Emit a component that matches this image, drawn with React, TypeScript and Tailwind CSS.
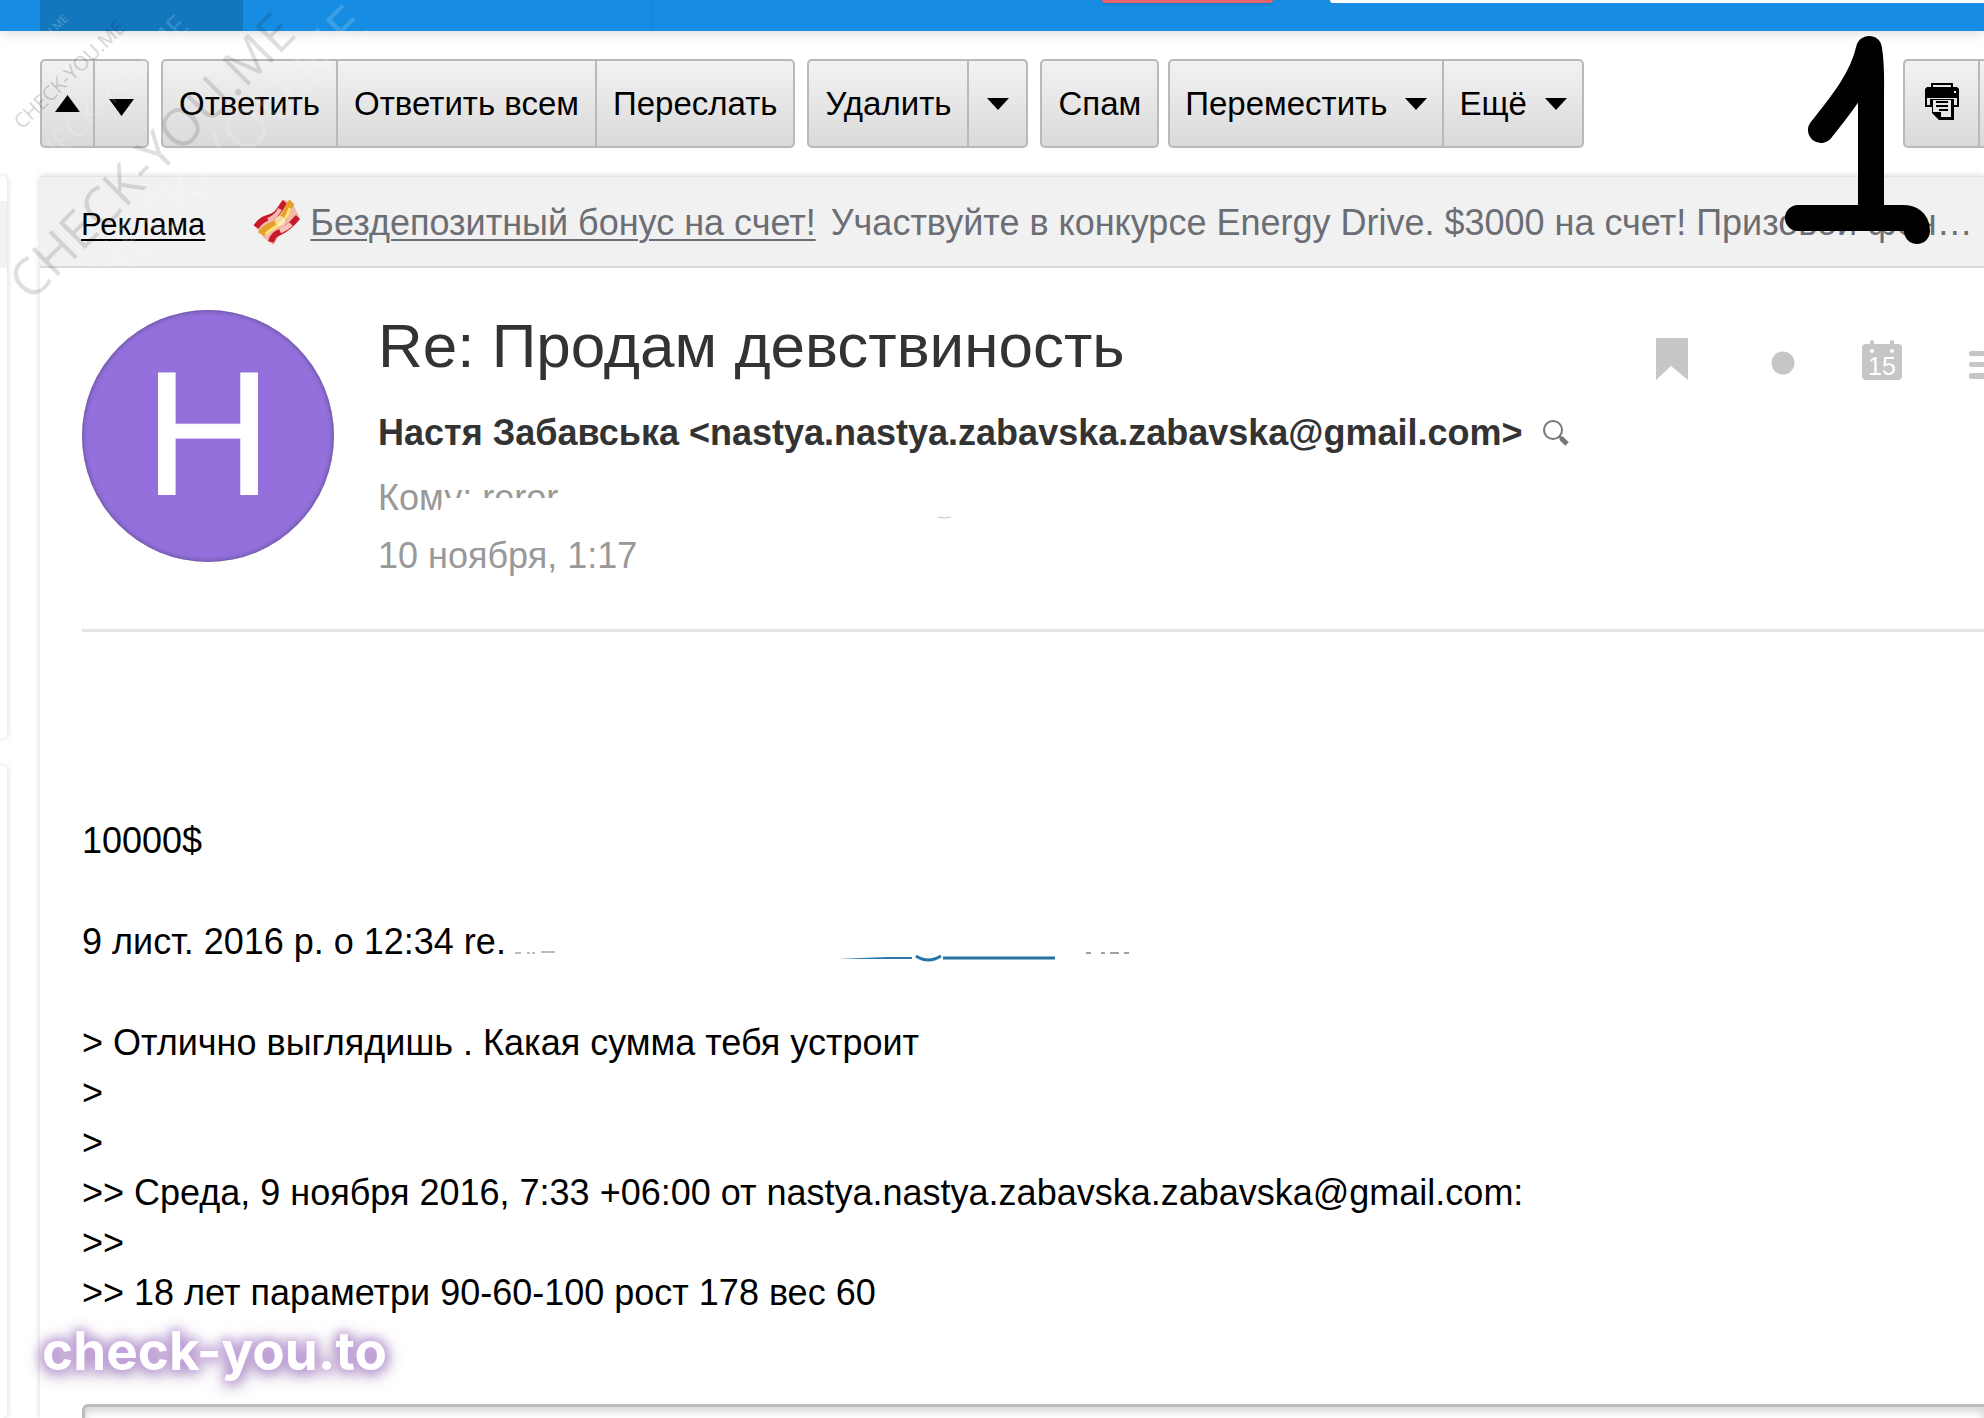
import type { ReactNode } from "react";

const quotedLines = [
  "> Отлично выглядишь . Какая сумма тебя устроит",
  ">",
  ">",
  ">> Среда, 9 ноября 2016, 7:33 +06:00 от nastya.nastya.zabavska.zabavska@gmail.com:",
  ">>",
  ">> 18 лет параметри 90-60-100 рост 178 вес 60",
];

function ButtonGroup({ children, className = "" }: { children: ReactNode; className?: string }) {
  return (
    <div
      className={`flex h-[89px] shrink-0 divide-x-2 divide-[#b9b9b9] overflow-hidden border-2 border-[#b9b9b9] bg-linear-to-b from-[#f2f2f2] to-[#dadada] ${className}`}
    >
      {children}
    </div>
  );
}

function ToolButton({ children, label, className = "px-4" }: { children?: ReactNode; label?: string; className?: string }) {
  return (
    <button type="button" aria-label={label} className={`flex items-center justify-center whitespace-nowrap text-[33px] leading-10 text-black ${className}`}>
      {children}
    </button>
  );
}

function Caret() {
  return (
    <svg width="22" height="12" viewBox="0 0 22 12" aria-hidden="true">
      <path d="M0 0h22L11 12z" />
    </svg>
  );
}

function PrintIcon() {
  return (
    <svg width="34" height="37" viewBox="0 0 34 37" className="-mt-1" aria-hidden="true">
      <path d="M6 0h22v6H6z" />
      <path d="M8 2h18v3H8z" fill="#e9e9e9" />
      <path d="M2 4h30l2 2v18h-5v13H14L7 30v-6H0V6z" />
      <path d="M2 15h30v7h-3v-6H5v6H2z" fill="#e6e6e6" />
      <path d="M8 17h18v17H16v-5H8z" fill="#e6e6e6" />
      <path d="M11 18h12v2H11zM11 22h12v2H11zM14 26h9v2h-9z" />
      <path d="M29 8h2v2h-2z" fill="#fff" />
    </svg>
  );
}

function RibbonIcon() {
  return (
    <svg width="46" height="46" viewBox="0 0 46 46" className="shrink-0" aria-hidden="true">
      <path d="M0 25C8 14 16 18 22 11C27 5 26 2 30 0L38 2L45 16C42 28 34 26 28 32C23 36 23 42 19 45L10 38Z" fill="#f0b9a8" />
      <path d="M2 27C10 15 17 20 23 13C28 7 28 5 31 2" fill="none" stroke="#c8192c" strokeWidth="6" />
      <path d="M14 20C20 18 23 15 26 9" fill="none" stroke="#f7b6b0" strokeWidth="4" />
      <path d="M7 34C13 24 19 28 27 20C35 13 32 8 38 2" fill="none" stroke="#e3a02a" strokeWidth="7" />
      <path d="M12 34C17 28 22 28 28 22C33 17 34 14 36 8" fill="none" stroke="#ffe27c" strokeWidth="3" />
      <path d="M17 42C20 31 27 34 34 27C39 23 41 20 44 17" fill="none" stroke="#c8192c" strokeWidth="6" />
      <path d="M26 31C31 29 34 27 37 24" fill="none" stroke="#f9c4b8" strokeWidth="5" />
      <circle cx="26" cy="21" r="5" fill="#fff2cf" opacity=".7" />
    </svg>
  );
}

function Toolbar() {
  return (
    <div className="flex pl-10 pt-7 pb-7">
      <ButtonGroup className="mr-3 rounded-[5px]">
        <ToolButton label="Предыдущее" className="w-[53px]">
          <svg width="25" height="17" viewBox="0 0 25 17" aria-hidden="true">
            <path d="M0 17h25L12.500 0z" />
          </svg>
        </ToolButton>
        <ToolButton label="Следующее" className="w-[52px] pt-2">
          <svg width="25" height="17" viewBox="0 0 25 17" aria-hidden="true">
            <path d="M0 0h25L12.500 17z" />
          </svg>
        </ToolButton>
      </ButtonGroup>
      <ButtonGroup className="mr-3 rounded-[5px]">
        <ToolButton>Ответить</ToolButton>
        <ToolButton>Ответить всем</ToolButton>
        <ToolButton>Переслать</ToolButton>
      </ButtonGroup>
      <ButtonGroup className="mr-3 rounded-[5px]">
        <ToolButton>Удалить</ToolButton>
        <ToolButton label="Варианты удаления" className="w-[57px]">
          <Caret />
        </ToolButton>
      </ButtonGroup>
      <ButtonGroup className="mr-[9px] rounded-[5px]">
        <ToolButton>Спам</ToolButton>
      </ButtonGroup>
      <ButtonGroup className="rounded-[5px]">
        <ToolButton className="gap-[18px] px-[15px]">
          Переместить <Caret />
        </ToolButton>
        <ToolButton className="gap-[18px] px-[15px]">
          Ещё <Caret />
        </ToolButton>
      </ButtonGroup>
      <ButtonGroup className="ml-auto w-[81px] rounded-l-[5px] border-r-0">
        <ToolButton label="Печать" className="w-[75px] shrink-0">
          <PrintIcon />
        </ToolButton>
        <ToolButton label="Далее" className="w-10 shrink-0" />
      </ButtonGroup>
    </div>
  );
}

function AdBar() {
  return (
    <div className="flex h-[92px] items-center overflow-hidden border-t border-b-2 border-t-[#e4e4e4] border-b-[#d9d9d9] bg-[#f1f1f1] pt-[3px] pl-[41px]">
      <a href="#ad" className="mt-[3px] mr-[49px] text-[31px] leading-10 text-black underline decoration-2 underline-offset-4">
        Реклама
      </a>
      <RibbonIcon />
      <p className="ml-[10px] min-w-0 flex-1 truncate text-[36px] leading-[50px] text-[#6b6e75]">
        <a href="#bonus" className="mr-[15px] underline decoration-2 underline-offset-4">
          Бездепозитный бонус на счет!
        </a>
        Участвуйте в конкурсе Energy Drive. $3000 на счет! Призовой фон…
      </p>
    </div>
  );
}

function MessageActions() {
  return (
    <div className="flex w-[328px] shrink-0 justify-between overflow-hidden pt-7 text-[#c6c6c6]">
      <button type="button" aria-label="Закладка" className="h-[42px]">
        <svg width="32" height="42" viewBox="0 0 32 42" fill="currentColor">
          <path d="M0 0h32v42L15 28 0 42z" />
        </svg>
      </button>
      <button type="button" aria-label="Пометить непрочитанным" className="ml-4 h-[49px]">
        <svg width="24" height="24" viewBox="0 0 24 24" fill="currentColor">
          <circle cx="12" cy="12" r="11.500" />
        </svg>
      </button>
      <button type="button" aria-label="Календарь" className="h-[44px]">
        <svg width="40" height="40" viewBox="0 0 40 40" fill="currentColor">
          <rect y="4" width="40" height="36" rx="4" />
          <rect x="8" width="4" height="9" rx="2" />
          <rect x="28" width="4" height="9" rx="2" />
          <circle cx="10" cy="11" r="2" fill="#fff" />
          <circle cx="30" cy="11" r="2" fill="#fff" />
          <text x="20" y="35" fontSize="25" textAnchor="middle" fill="#fff">
            15
          </text>
        </svg>
      </button>
      <button type="button" aria-label="Меню" className="h-[54px] w-[15px] overflow-hidden">
        <svg width="40" height="28" viewBox="0 0 40 28" fill="currentColor" className="max-w-none">
          <rect width="40" height="5" rx="2" />
          <rect y="11" width="40" height="5" rx="2" />
          <rect y="22" width="40" height="6" rx="2" />
        </svg>
      </button>
    </div>
  );
}

function MessageHeader() {
  return (
    <div className="flex border-b-3 border-[#e5e5e5] pb-11">
      <div className="mr-11 flex size-[252px] shrink-0 items-center justify-center rounded-full bg-[#9370db] pb-[5px] text-[177px] leading-none text-white shadow-[inset_0_0_5px_rgba(60,50,90,0.7)] [-webkit-text-stroke:1px_white]">
        Н
      </div>
      <div className="min-w-0 flex-1">
        <h1 className="text-[62px] leading-[72px] text-[#333]">Re: Продам девствиность</h1>
        <div className="mt-[19px] flex items-center text-[36px] leading-[64px] font-bold whitespace-nowrap text-[#333]">
          Настя Забавська &lt;nastya.nastya.zabavska.zabavska@gmail.com&gt;
          <button type="button" aria-label="Найти письма" className="ml-5">
            <svg width="26" height="26" viewBox="0 0 26 26" fill="none" stroke="#777">
              <circle cx="10" cy="10" r="9" strokeWidth="2" />
              <path d="M16 16l3 3" strokeWidth="3" />
              <path d="M18 18l6 6" strokeWidth="5" />
            </svg>
          </button>
        </div>
        <div className="relative mt-1 text-[36px] leading-[58px] text-[#999]">
          Кому: reror
          <svg width="600" height="58" viewBox="0 0 600 58" className="absolute top-0 left-0" aria-hidden="true">
            <path d="M58 54L64 34L70 29H190V58H58z" fill="#fff" />
            <path d="M560 48q6 2 13 0" fill="none" stroke="#c4c4c4" />
          </svg>
        </div>
        <div className="text-[36px] leading-[58px] text-[#999]">10 ноября, 1:17</div>
      </div>
      <MessageActions />
    </div>
  );
}

function MessageBody() {
  return (
    <div className="pt-[184px] text-[36px] leading-[50px] text-black">
      <p className="mb-[51px]">10000$</p>
      <p className="mb-[51px] whitespace-nowrap">
        9 лист. 2016 р. о 12:34 re.
        <svg width="640" height="24" viewBox="5 0 640 24" className="-mb-3 inline-block max-w-none align-baseline" aria-hidden="true">
          <path d="M14 11h6M26 11h3M31 11h3M40 10h14" stroke="#777" fill="none" />
          <path d="M336 17l50-2h25v2z" fill="#2a78ab" />
          <path d="M415 14q12 8 25 0" fill="none" stroke="#1f74ab" strokeWidth="3" />
          <path d="M442 16h112" stroke="#23749f" strokeWidth="3" />
          <path d="M585 11h5M600 11h4M609 11h9M623 11h5" stroke="#444" fill="none" />
        </svg>
      </p>
      <div>
        {quotedLines.map((line, idx) => (
          <p key={idx}>{line}</p>
        ))}
      </div>
    </div>
  );
}

// Diagonal site marks over the top left corner and the handwritten page number
function Overlays() {
  return (
    <>
      <svg width="420" height="330" viewBox="0 0 420 330" className="pointer-events-none absolute top-0 left-0 font-['Open_Sans',sans-serif]" aria-hidden="true">
        <text transform="translate(31 303) rotate(-45)" fontSize="52" fill="#000" opacity=".12">CHECK-YOU.ME</text>
        <text transform="translate(22 130) rotate(-44)" fontSize="20" fill="#000" opacity=".16">CHECK-YOU.ME</text>
        <text transform="translate(36 182) rotate(-45)" fontSize="30" fill="#fff" opacity=".15">CHECK-YOU.ME</text>
        <text transform="translate(84 318) rotate(-45)" fontSize="56" fill="#fff" opacity=".15">CHECK-YOU.ME</text>
        <text transform="translate(12 76) rotate(-45)" fontSize="11" fill="#fff" opacity=".25">CHECK-YOU.ME</text>
      </svg>
      <svg width="170" height="220" viewBox="1774 30 170 220" className="pointer-events-none absolute top-[30px] right-10" fill="none" stroke="#000" strokeWidth="26" strokeLinecap="round" strokeLinejoin="round" aria-hidden="true">
        <path d="M1821 130C1840 106 1862 80 1869 49C1872 66 1871 80 1871 100V212" />
        <path d="M1798 218H1900Q1917 217 1917 231" />
      </svg>
      <div className="pointer-events-none absolute top-[1319px] left-[42px] font-[Inter,sans-serif] text-[53px] leading-16 font-bold text-white [text-shadow:0_0_8px_#c9a6e4,0_0_14px_#b48ad2,0_3px_18px_#7d6390]">
        check-you.to
      </div>
    </>
  );
}

export default function App() {
  return (
    <div className="relative flex h-screen flex-col overflow-hidden bg-white font-['Liberation_Sans',Arial,sans-serif]">
      <header className="flex h-[31px] shrink-0 items-start bg-[#168de2] pl-10 shadow-[0_2px_12px_rgba(0,0,0,0.15)]">
        <div className="h-full w-[203px] bg-[#1377be]" />
        <div className="mr-[450px] h-full w-[409px] border-r border-[#1580cc]" />
        <div className="h-[3px] w-[171px] rounded-b-[4px] bg-[#e8646c] shadow-sm" />
        <div className="ml-[57px] h-[3px] flex-1 rounded-bl-[4px] bg-white" />
      </header>
      <Toolbar />
      <div className="flex min-h-0 flex-1">
        <aside className="mr-[33px] flex w-[7px] shrink-0 flex-col gap-7">
          <div className="h-[562px] shrink-0 rounded-r-[5px] pt-[25px] shadow-[0_0_6px_rgba(0,0,0,0.18)]">
            <div className="h-[67px] bg-[#f1f1f1]" />
          </div>
          <div className="flex-1 rounded-r-[5px] shadow-[0_0_6px_rgba(0,0,0,0.18)]" />
        </aside>
        <main className="min-w-0 flex-1 shadow-[0_0_6px_rgba(0,0,0,0.16)]">
          <AdBar />
          <div className="pt-[42px] pl-[42px]">
            <MessageHeader />
            <MessageBody />
            <textarea
              aria-label="Ответ"
              className="mt-[86px] block h-[160px] w-full resize-none rounded-tl-[6px] border-t-3 border-l-3 border-[#bcbcbc] bg-white p-4 text-[36px] shadow-[inset_0_4px_8px_rgba(0,0,0,0.18)] outline-none"
            />
          </div>
        </main>
      </div>
      <Overlays />
    </div>
  );
}
